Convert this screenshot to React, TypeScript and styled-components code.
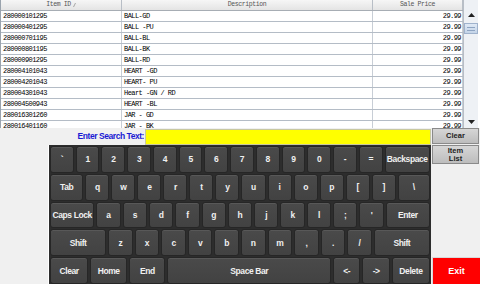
import React from "react";
import styled, { createGlobalStyle } from "styled-components";

const Global = createGlobalStyle`
  html, body { margin: 0; padding: 0; background: #f0f0f0; }
  body { font-family: "Liberation Sans", Arial, sans-serif; }
`;

const items = [
    ["280000101295", "BALL-GD", "29.99"],
    ["280000401295", "BALL -PU", "29.99"],
    ["280000701195", "BALL-BL", "29.99"],
    ["280000801195", "BALL-BK", "29.99"],
    ["280000901295", "BALL-RD", "29.99"],
    ["280004101043", "HEART -GD", "29.99"],
    ["280004201043", "HEART- PU", "29.99"],
    ["280004301043", "Heart -GN / RD", "29.99"],
    ["280004500943", "HEART -BL", "29.99"],
    ["280016301260", "JAR - GD", "29.99"],
    ["280016401160", "JAR - BK", "29.99"],
];

const keyRows: { label: string; grow?: number }[][] = [
    [
        { label: "`" }, { label: "1" }, { label: "2" }, { label: "3" }, { label: "4" }, { label: "5" },
        { label: "6" }, { label: "7" }, { label: "8" }, { label: "9" }, { label: "0" }, { label: "-" },
        { label: "=" }, { label: "Backspace", grow: 2.0 },
    ],
    [
        { label: "Tab", grow: 1.42 }, { label: "q" }, { label: "w" }, { label: "e" }, { label: "r" },
        { label: "t" }, { label: "y" }, { label: "u" }, { label: "i" }, { label: "o" }, { label: "p" },
        { label: "[" }, { label: "]" }, { label: "\\", grow: 1.38 },
    ],
    [
        { label: "Caps Lock", grow: 1.9 }, { label: "a" }, { label: "s" }, { label: "d" }, { label: "f" },
        { label: "g" }, { label: "h" }, { label: "j" }, { label: "k" }, { label: "l" }, { label: ";" },
        { label: "'" }, { label: "Enter", grow: 1.9 },
    ],
    [
        { label: "Shift", grow: 2.4 }, { label: "z" }, { label: "x" }, { label: "c" }, { label: "v" },
        { label: "b" }, { label: "n" }, { label: "m" }, { label: "," }, { label: "." }, { label: "/" },
        { label: "Shift", grow: 2.4 },
    ],
    [
        { label: "Clear", grow: 1.5 }, { label: "Home", grow: 1.45 }, { label: "End", grow: 1.42 },
        { label: "Space Bar", grow: 6.7 }, { label: "<-", grow: 1.05 }, { label: "->", grow: 1.05 },
        { label: "Delete", grow: 1.5 },
    ],
];

const Screen = styled.div`
  width: 480px;
  height: 284px;
  display: flex;
  flex-direction: column;
  background: #f0f0f0;
  overflow: hidden;
`;

const TablePane = styled.div`
  height: 128px;
  display: flex;
  background: #ffffff;
  border-left: 1px solid #9aa3ad;
  box-sizing: border-box;
`;

const Table = styled.div`
  flex: 1;
  display: flex;
  flex-direction: column;
  overflow: hidden;
`;

const HeadRow = styled.div`
  height: 11px;
  flex: none;
  display: grid;
  grid-template-columns: 121px 251px 1fr;
  background: linear-gradient(#f6f6f6, #e4e4e4);
  border-bottom: 1px solid #a7adb4;
  box-sizing: border-box;
`;

const HeadCell = styled.div`
  font-family: "Liberation Mono", "Courier New", monospace;
  font-size: 6.5px;
  letter-spacing: -0.4px;
  line-height: 10px;
  color: #555;
  text-align: center;
  border-right: 1px solid #b8bec6;
  display: flex;
  align-items: center;
  justify-content: center;
  gap: 2px;
`;

const Row = styled.div`
  height: 11px;
  flex: none;
  display: grid;
  grid-template-columns: 121px 251px 1fr;
  border-bottom: 1px solid #b4bcc6;
  box-sizing: border-box;
`;

const Cell = styled.div<{ $right?: boolean }>`
  font-family: "Liberation Mono", "Courier New", monospace;
  font-size: 7px;
  letter-spacing: -0.55px;
  line-height: 10px;
  color: #000;
  padding: 0 1px 0 2px;
  text-align: ${(p) => (p.$right ? "right" : "left")};
  border-right: 1px solid #c8ced6;
  white-space: nowrap;
  overflow: hidden;
`;

const ScrollBar = styled.div`
  width: 14px;
  margin-right: 2px;
  display: flex;
  flex-direction: column;
  background: #eef1f5;
  border-left: 1px solid #b8bec6;
  padding-top: 8px;
`;

const ScrollBtn = styled.div`
  height: 13px;
  display: flex;
  align-items: center;
  justify-content: center;
`;

const Thumb = styled.div`
  height: 11px;
  margin: 2px 0 0;
  background: linear-gradient(#dfe9f5, #c4d4e8);
  border: 1px solid #9fb2cc;
  box-sizing: border-box;
  display: flex;
  flex-direction: column;
  justify-content: center;
  gap: 2px;
  padding: 0 2px;
`;

const Grip = styled.div`
  height: 1px;
  background: #8ea4c2;
`;

const Track = styled.div`
  flex: 1;
`;

const Bottom = styled.div`
  flex: 1;
  display: flex;
`;

const Main = styled.div`
  width: 432px;
  display: flex;
  flex-direction: column;
`;

const SearchRow = styled.div`
  height: 17px;
  display: flex;
  align-items: stretch;
  padding-top: 1px;
  box-sizing: border-box;
`;

const SearchLabel = styled.div`
  width: 145px;
  text-align: right;
  font-size: 8.5px;
  font-weight: bold;
  letter-spacing: -0.45px;
  color: #1a1ad4;
  line-height: 15px;
  padding-right: 1px;
  box-sizing: border-box;
`;

const SearchInput = styled.div`
  flex: 1;
  background: #ffff00;
  border: 1px solid #c8c8a0;
  margin-right: 1px;
`;

const KeyboardRow = styled.div`
  flex: 1;
  display: flex;
`;

const Spacer = styled.div`
  width: 48px;
  border-right: 1px solid #ffffff;
`;

const Keyboard = styled.div`
  flex: 1;
  display: flex;
  flex-direction: column;
  gap: 1px;
  padding: 1px 1px 0 1px;
  background: #2d2d2d;
  margin-right: 1px;
`;

const KeyRow = styled.div`
  flex: 1;
  display: flex;
  gap: 2px;
`;

const Key = styled.div<{ $grow: number }>`
  flex: ${(p) => p.$grow} 1 0;
  min-width: 0;
  background: linear-gradient(#4a4a4a, #424242);
  border: 1px solid #262626;
  border-radius: 3px;
  box-shadow: inset 0 1px 0 #585858;
  color: #f0f0f0;
  font-size: 8.5px;
  font-weight: bold;
  letter-spacing: -0.4px;
  display: flex;
  align-items: center;
  justify-content: center;
  white-space: nowrap;
  overflow: hidden;
`;

const Side = styled.div`
  flex: 1;
  display: flex;
  flex-direction: column;
  gap: 1px;
`;

const SideBtn = styled.div<{ $h: number }>`
  height: ${(p) => p.$h}px;
  background: linear-gradient(#d6d6d6, #bdbdbd);
  border: 1px solid #8a8a8a;
  box-sizing: border-box;
  color: #222;
  font-size: 7.5px;
  font-weight: bold;
  line-height: 8px;
  display: flex;
  align-items: center;
  justify-content: center;
  text-align: center;
  margin-right: 1px;
`;

const Fill = styled.div`
  flex: 1;
`;

const ExitBtn = styled.div`
  height: 26px;
  background: #ff0000;
  border-top: 1px solid #d8d8d8;
  border-left: 1px solid #d8d8d8;
  color: #ffffff;
  font-size: 9px;
  font-weight: bold;
  display: flex;
  align-items: center;
  justify-content: center;
`;

function Arrow({ up }: { up?: boolean }) {
    return (
        <svg width="7" height="4" viewBox="0 0 7 4">
            <polygon points={up ? "0,4 7,4 3.5,0" : "0,0 7,0 3.5,4"} fill="#222" />
        </svg>
    );
}

export default function App() {
    return (
        <Screen>
            <Global />
            <TablePane>
                <Table>
                    <HeadRow>
                        <HeadCell>
                            Item ID
                            <svg width="3" height="4" viewBox="0 0 3 4">
                                <line x1="0.5" y1="4" x2="2.5" y2="0" stroke="#888" strokeWidth="0.7" />
                            </svg>
                        </HeadCell>
                        <HeadCell>Description</HeadCell>
                        <HeadCell>Sale Price</HeadCell>
                    </HeadRow>
                    {items.map((it, i) => (
                        <Row key={i}>
                            <Cell>{it[0]}</Cell>
                            <Cell>{it[1]}</Cell>
                            <Cell $right>{it[2]}</Cell>
                        </Row>
                    ))}
                </Table>
                <ScrollBar>
                    <ScrollBtn><Arrow up /></ScrollBtn>
                    <Thumb><Grip /><Grip /></Thumb>
                    <Track />
                    <ScrollBtn><Arrow /></ScrollBtn>
                </ScrollBar>
            </TablePane>
            <Bottom>
                <Main>
                    <SearchRow>
                        <SearchLabel>Enter Search Text:</SearchLabel>
                        <SearchInput />
                    </SearchRow>
                    <KeyboardRow>
                        <Spacer />
                        <Keyboard>
                            {keyRows.map((row, r) => (
                                <KeyRow key={r}>
                                    {row.map((k, i) => (
                                        <Key key={i} $grow={k.grow ?? 1}>{k.label}</Key>
                                    ))}
                                </KeyRow>
                            ))}
                        </Keyboard>
                    </KeyboardRow>
                </Main>
                <Side>
                    <SideBtn $h={16}>Clear</SideBtn>
                    <SideBtn $h={19}>Item<br />List</SideBtn>
                    <Fill />
                    <ExitBtn>Exit</ExitBtn>
                </Side>
            </Bottom>
        </Screen>
    );
}
